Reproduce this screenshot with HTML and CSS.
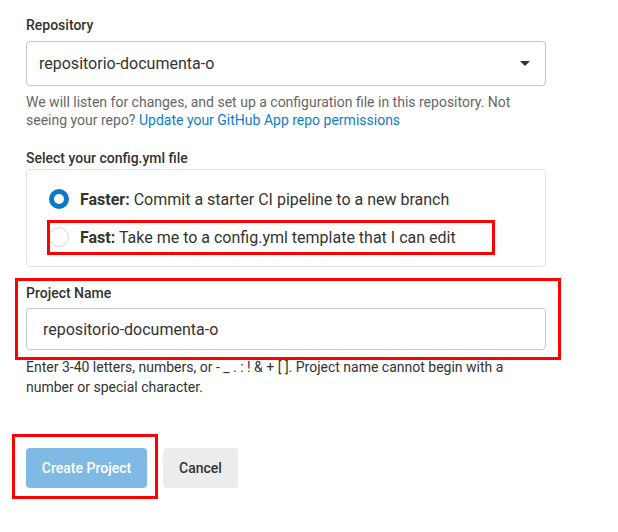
FILE: index.html
```html
<!DOCTYPE html>
<html>
<head>
<meta charset="utf-8">
<link rel="stylesheet" href="styles.css">
</head>
<body>
<div class="form">
  <div class="field">
    <div class="label">Repository</div>
    <div class="select">
      <span>repositorio-documenta-o</span>
      <svg class="caret" width="10" height="5" viewBox="0 0 10 5"><path d="M0 0H10L5 5Z" fill="#333"/></svg>
    </div>
    <p class="help"><span class="line">We will listen for changes, and set up a configuration file in this repository. Not</span><span class="line">seeing your repo? <a class="link">Update your GitHub App repo permissions</a></span></p>
  </div>

  <div class="field config">
    <div class="label">Select your config.yml file</div>
    <div class="card">
      <label class="option">
        <span class="radio checked"></span>
        <span><b>Faster:</b> Commit a starter CI pipeline to a new branch</span>
      </label>
      <label class="option">
        <span class="radio"></span>
        <span><b>Fast:</b> Take me to a config.yml template that I can edit</span>
        <span class="mark mark-fast"></span>
      </label>
    </div>
  </div>

  <div class="field project">
    <span class="mark mark-project"></span>
    <div class="label">Project Name</div>
    <div class="input">repositorio-documenta-o</div>
    <p class="help dark">Enter 3-40 letters, numbers, or - _ . : ! &amp; + [ ]. Project name cannot begin with a number or special character.</p>
  </div>

  <div class="actions">
    <div class="btn-wrap">
      <span class="mark mark-create"></span>
      <button class="btn primary">Create Project</button>
    </div>
    <button class="btn secondary">Cancel</button>
  </div>
</div>
</body>
</html>
```

FILE: styles.css
```css
* { box-sizing: border-box; }
html, body { margin: 0; padding: 0; background: #fff; }
body {
  font-family: Roboto, "Noto Sans", sans-serif;
  color: #333;
  width: 618px;
  height: 532px;
  overflow: hidden;
}
.form {
  padding: 15px 0 0 26px;
  width: 546px;
}
.label {
  font-size: 14px;
  font-weight: 500;
  line-height: 20px;
  color: #333;
}
.select {
  margin-top: 6px;
  height: 45px;
  border: 1px solid #c6c6c6;
  border-radius: 4px;
  display: flex;
  align-items: center;
  justify-content: space-between;
  padding: 0 15px 0 12px;
  font-size: 16px;
  color: #333;
}
.caret { display: block; }
.help {
  margin: 7px 0 0;
  font-size: 14px;
  line-height: 18px;
  color: #666;
}
.help .line { display: block; white-space: nowrap; }
.help.dark { color: #333; line-height: 20px; margin-top: 7px; }
.link { color: #0f7dc7; }
.config { margin-top: 19px; }
.card {
  margin-top: 1px;
  border: 1px solid #e3e3e3;
  border-radius: 4px;
  padding: 10px 0 10px 22px;
}
.option {
  position: relative;
  display: flex;
  align-items: center;
  gap: 11px;
  height: 38px;
  font-size: 16px;
  color: #333;
}
.option b { font-weight: 700; }
.radio {
  width: 20px;
  height: 20px;
  border-radius: 50%;
  border: 1px solid #d4d4d4;
  background: #fff;
  flex: none;
}
.radio.checked {
  border: 5px solid #0b78c8;
}
.mark {
  position: absolute;
  border: 3px solid #f00;
  pointer-events: none;
}
.mark-fast {
  left: -2px;
  top: 2px;
  width: 448px;
  height: 35px;
}
.project {
  position: relative;
  margin-top: 16px;
}
.mark-project {
  left: -11px;
  top: -5px;
  width: 546px;
  height: 82px;
}
.input {
  margin-top: 5px;
  height: 42px;
  border: 1px solid #c6c6c6;
  border-radius: 4px;
  display: flex;
  align-items: center;
  padding-left: 16px;
  font-size: 16px;
  color: #333;
}
.actions {
  margin-top: 51px;
  display: flex;
  gap: 16px;
}
.btn-wrap { position: relative; }
.mark-create {
  left: -14px;
  top: -14px;
  width: 146px;
  height: 65px;
}
.btn {
  height: 40px;
  border: none;
  border-radius: 4px;
  font-family: Roboto, "Noto Sans", sans-serif;
  font-size: 14px;
  font-weight: 500;
  padding: 0 15px;
}
.primary {
  width: 121px;
  background: #7fbae5;
  color: #fff;
}
.secondary {
  width: 75px;
  background: #ececec;
  color: #333;
}
```
